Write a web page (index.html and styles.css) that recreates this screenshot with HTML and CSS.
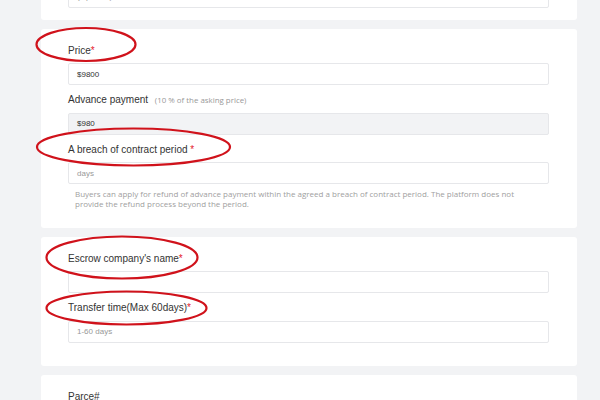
FILE: index.html
```html
<!DOCTYPE html>
<html>
<head>
<meta charset="utf-8">
<link rel="stylesheet" href="styles.css">
</head>
<body>
<div class="page">
  <div class="card card-first">
    <div class="field">
      <div class="input"><span class="ph">(Optional)</span></div>
    </div>
  </div>

  <div class="card">
    <div class="field">
      <div class="label">Price<span class="req">*</span></div>
      <div class="input"><span class="val">$9800</span></div>
    </div>
    <div class="field">
      <div class="label">Advance payment <span class="note">(10 % of the asking price)</span></div>
      <div class="input disabled"><span class="val">$980</span></div>
    </div>
    <div class="field last">
      <div class="label">A breach of contract period <span class="req">*</span></div>
      <div class="input"><span class="ph">days</span></div>
      <p class="help">Buyers can apply for refund of advance payment within the agreed a breach of contract period. The platform does not provide the refund process beyond the period.</p>
    </div>
  </div>

  <div class="card card-third">
    <div class="field">
      <div class="label">Escrow company's name<span class="req">*</span></div>
      <div class="input"></div>
    </div>
    <div class="field last">
      <div class="label">Transfer time(Max 60days)<span class="req">*</span></div>
      <div class="input"><span class="ph">1-60 days</span></div>
    </div>
  </div>

  <div class="card">
    <div class="field">
      <div class="label">Parce#</div>
      <div class="input"></div>
    </div>
  </div>

  <svg class="marks" width="600" height="400" viewBox="0 0 600 400">
    <ellipse cx="86" cy="44.5" rx="49.5" ry="16.5" />
    <ellipse cx="133.5" cy="147" rx="96.5" ry="18.5" />
    <ellipse cx="122" cy="257.5" rx="75.5" ry="21" />
    <ellipse cx="126.5" cy="308" rx="80" ry="16.5" />
  </svg>
</div>
</body>
</html>
```

FILE: styles.css
```css
html, body {
  margin: 0;
  padding: 0;
  background: #f2f3f5;
}
body {
  width: 600px;
  height: 400px;
  overflow: hidden;
  font-family: "Liberation Sans", Arial, sans-serif;
  color: #333;
}
.page {
  position: relative;
  padding-left: 41px;
  width: 536px;
}
.card {
  background: #fff;
  border-radius: 3px;
  padding: 16px 28px 18.5px 27px;
  margin-bottom: 9px;
}
.card-first {
  margin-top: -30.5px;
  padding-bottom: 12px;
}
.card-third {
  padding-bottom: 23px;
}
.field {
  margin-bottom: 9px;
}
.field.last {
  margin-bottom: 0;
}
.card-first .field {
  margin-bottom: 0;
}
.label {
  font-size: 10px;
  line-height: 12px;
  height: 12px;
  margin-bottom: 6.5px;
  color: #333;
  white-space: nowrap;
}
.req {
  color: #e4202c;
  font-size: 10px;
}
.note {
  font-family: "Open Sans", sans-serif;
  font-size: 7.9px;
  color: #999;
  margin-left: 4px;
}
.input {
  box-sizing: border-box;
  height: 22px;
  border: 1px solid #e6e7ea;
  border-radius: 2px;
  background: #fff;
  padding: 0 8px;
  display: flex;
  align-items: center;
  font-size: 8px;
}
.input.disabled {
  background: #f2f3f5;
}
.val {
  color: #333;
}
.ph {
  color: #999;
}
.help {
  margin: 5px 20px 0 7px;
  font-family: "Open Sans", sans-serif;
  font-size: 8px;
  line-height: 10px;
  color: #a0a0a0;
}
.marks {
  position: absolute;
  left: 0;
  top: 30.5px;
  pointer-events: none;
}
.marks ellipse {
  fill: none;
  stroke: #d0121b;
  stroke-width: 2.2;
}
```
